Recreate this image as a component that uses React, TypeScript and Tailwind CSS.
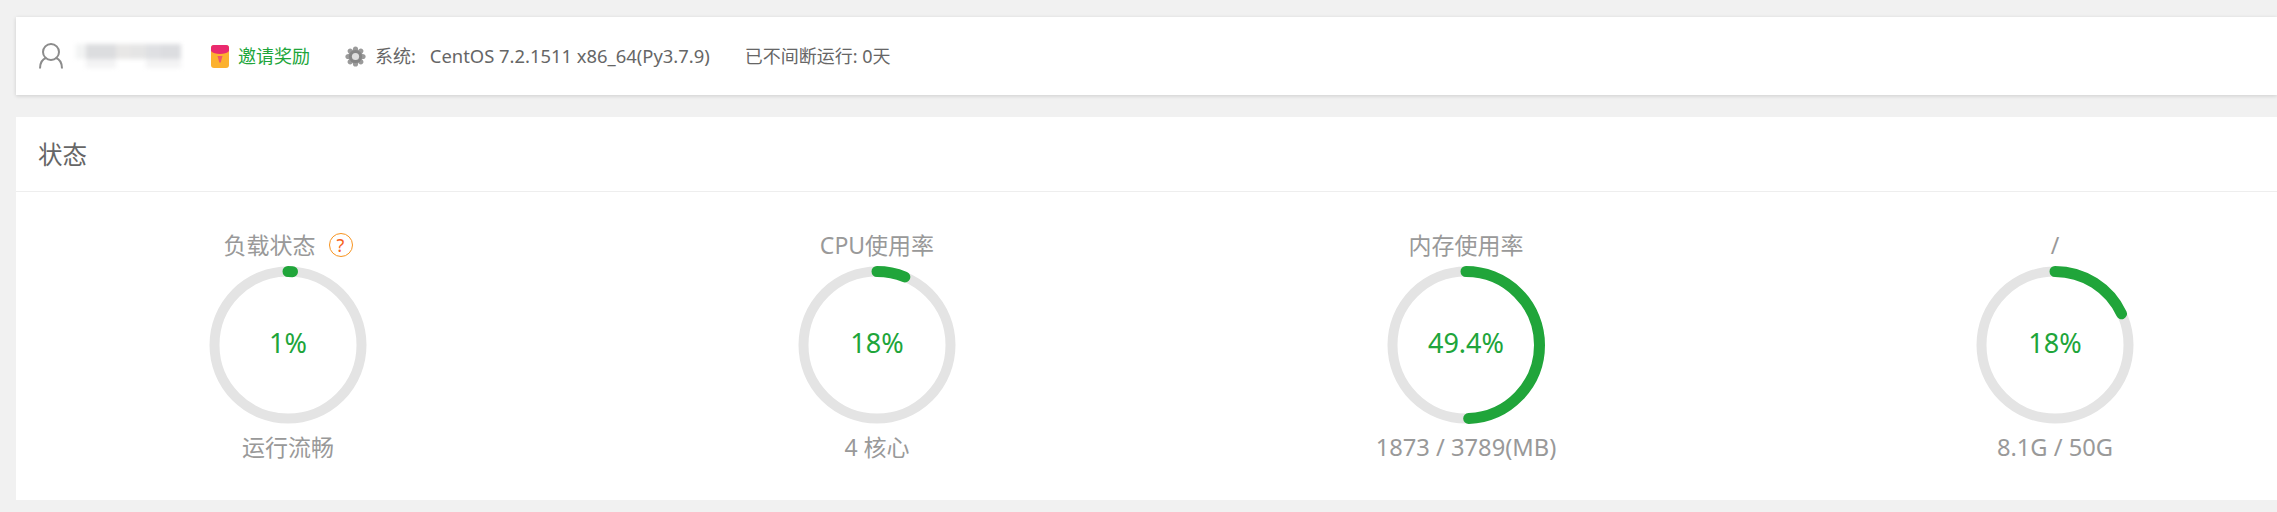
const FONT = "font-['Noto_Sans','Noto_Sans_CJK_SC',sans-serif]";

function UserIcon() {
  return (
    <svg width="26" height="26" viewBox="0 0 26 26" fill="none" stroke="#8c8c8c" strokeWidth="2">
      <circle cx="13" cy="9" r="8" />
      <path d="M2 25.5c0-6 3-9.500 6.500-10.700M24 25.500c0-6-3-9.500-6.500-10.700" />
    </svg>
  );
}

function PacketIcon() {
  return (
    <svg width="18" height="23" viewBox="0 0 18 23">
      <rect x="0" y="0" width="18" height="23" rx="3" fill="#fcb12f" />
      <path d="M0 3a3 3 0 0 1 3-3h12a3 3 0 0 1 3 3v3c-2 2.200-5 3-9 3s-7-.8-9-3z" fill="#ea2a6f" />
      <path d="M6.500 11h5l-1.800 6.500h-1.400z" fill="#f0566a" />
    </svg>
  );
}

function GearIcon() {
  const angles = [0, 45, 90, 135, 180, 225, 270, 315];
  return (
    <svg width="21" height="21" viewBox="0 0 21 21" className="blur-[0.5px]">
      {angles.map((a) => (
        <ellipse key={a} cx="10.500" cy="3.600" rx="2.600" ry="3.200" fill="#9a9a9a" transform={`rotate(${a} 10.500 10.500)`} />
      ))}
      <circle cx="10.500" cy="10.500" r="6.600" fill="#858585" />
      <circle cx="10.500" cy="10.500" r="3.600" fill="#dddddd" />
    </svg>
  );
}

function HelpIcon() {
  return (
    <span className="flex h-6 w-6 items-center justify-center rounded-full border-[1.5px] border-[#f7931e] text-[18px] leading-none text-[#f7631e]">
      ?
    </span>
  );
}

function Ring({ value, label }: { value: number; label: string }) {
  return (
    <div className="relative h-[160px] w-[160px]">
      <svg width="160" height="160" viewBox="0 0 160 160" className="-rotate-90">
        <circle cx="80" cy="80" r="73.500" fill="none" stroke="#e4e4e4" strokeWidth="10" />
        <circle
          cx="80"
          cy="80"
          r="73.500"
          fill="none"
          stroke="#20a53a"
          strokeWidth="11"
          strokeLinecap="round"
          pathLength={100}
          strokeDasharray={`${value} 100`}
        />
      </svg>
      <div className="absolute inset-0 flex items-center justify-center pb-[3px] text-[27px] text-[#20a53a]">
        {label}
      </div>
    </div>
  );
}

function Gauge({
  title,
  value,
  label,
  sub,
  help,
  wide,
}: {
  title: string;
  value: number;
  label: string;
  sub: string;
  help?: boolean;
  wide?: boolean;
}) {
  return (
    <div className="flex w-[160px] flex-col items-center">
      <div className="mb-[3px] flex h-[34px] items-center whitespace-nowrap text-[23px] leading-[34px] text-[#999]">
        {title}
        {help && (
          <span className="ml-[13px]">
            <HelpIcon />
          </span>
        )}
      </div>
      <Ring value={value} label={label} />
      <div
        className={
          wide
            ? "mt-[5px] h-[34px] whitespace-nowrap text-[23.7px] leading-[34px] text-[#999]"
            : "mt-[5px] h-[34px] whitespace-nowrap text-[23px] leading-[34px] text-[#999]"
        }
      >
        {sub}
      </div>
    </div>
  );
}

export default function App() {
  return (
    <div className={`${FONT} flex min-h-[512px] flex-col bg-[#f1f1f1] pl-4 pt-[17px]`}>
      <div className="flex h-[78px] items-center bg-white pl-[22px] text-[18px] text-[#666] shadow-[0_1px_4px_rgba(0,0,0,0.15)]">
        <UserIcon />
        <div className="ml-[12px] flex h-6 w-[105px] flex-col blur-[2px]">
          <div className="flex h-[15px]">
            <div className="w-[10px] bg-[#f2f3f3]" />
            <div className="w-[30px] bg-[#dcdddf]" />
            <div className="w-[15px] bg-[#e8e7e6]" />
            <div className="w-[15px] bg-[#e5e5e5]" />
            <div className="w-[15px] bg-[#dfe0e3]" />
            <div className="w-[20px] bg-[#dcdde0]" />
          </div>
          <div className="flex h-[9px]">
            <div className="w-[10px]" />
            <div className="w-[30px] bg-[#f3f3f4]" />
            <div className="w-[30px]" />
            <div className="w-[35px] bg-[#f3f3f4]" />
          </div>
        </div>
        <div className="ml-[30px] flex items-center">
          <PacketIcon />
        </div>
        <span className="ml-[9px] text-[#20a53a]">邀请奖励</span>
        <div className="ml-[35px] flex items-center">
          <GearIcon />
        </div>
        <span className="ml-[9px]">系统:</span>
        <span className="ml-[14px] text-[18.400px]">CentOS 7.2.1511 x86_64(Py3.7.9)</span>
        <span className="ml-[35px]">已不间断运行: 0天</span>
      </div>
      <div className="mt-[22px] flex h-[383px] flex-col bg-white">
        <div className="flex h-[75px] items-center border-b border-[#eeeeee] pl-[22px] pt-[2px] text-[24.500px] text-[#666]">
          状态
        </div>
        <div className="flex gap-[429px] pl-[192px] pt-[36px]">
          <Gauge title="负载状态" value={1} label="1%" sub="运行流畅" help />
          <Gauge title="CPU使用率" value={6.2} label="18%" sub="4 核心" />
          <Gauge title="内存使用率" value={49.4} label="49.4%" sub="1873 / 3789(MB)" wide />
          <Gauge title="/" value={18} label="18%" sub="8.1G / 50G" wide />
        </div>
      </div>
    </div>
  );
}
